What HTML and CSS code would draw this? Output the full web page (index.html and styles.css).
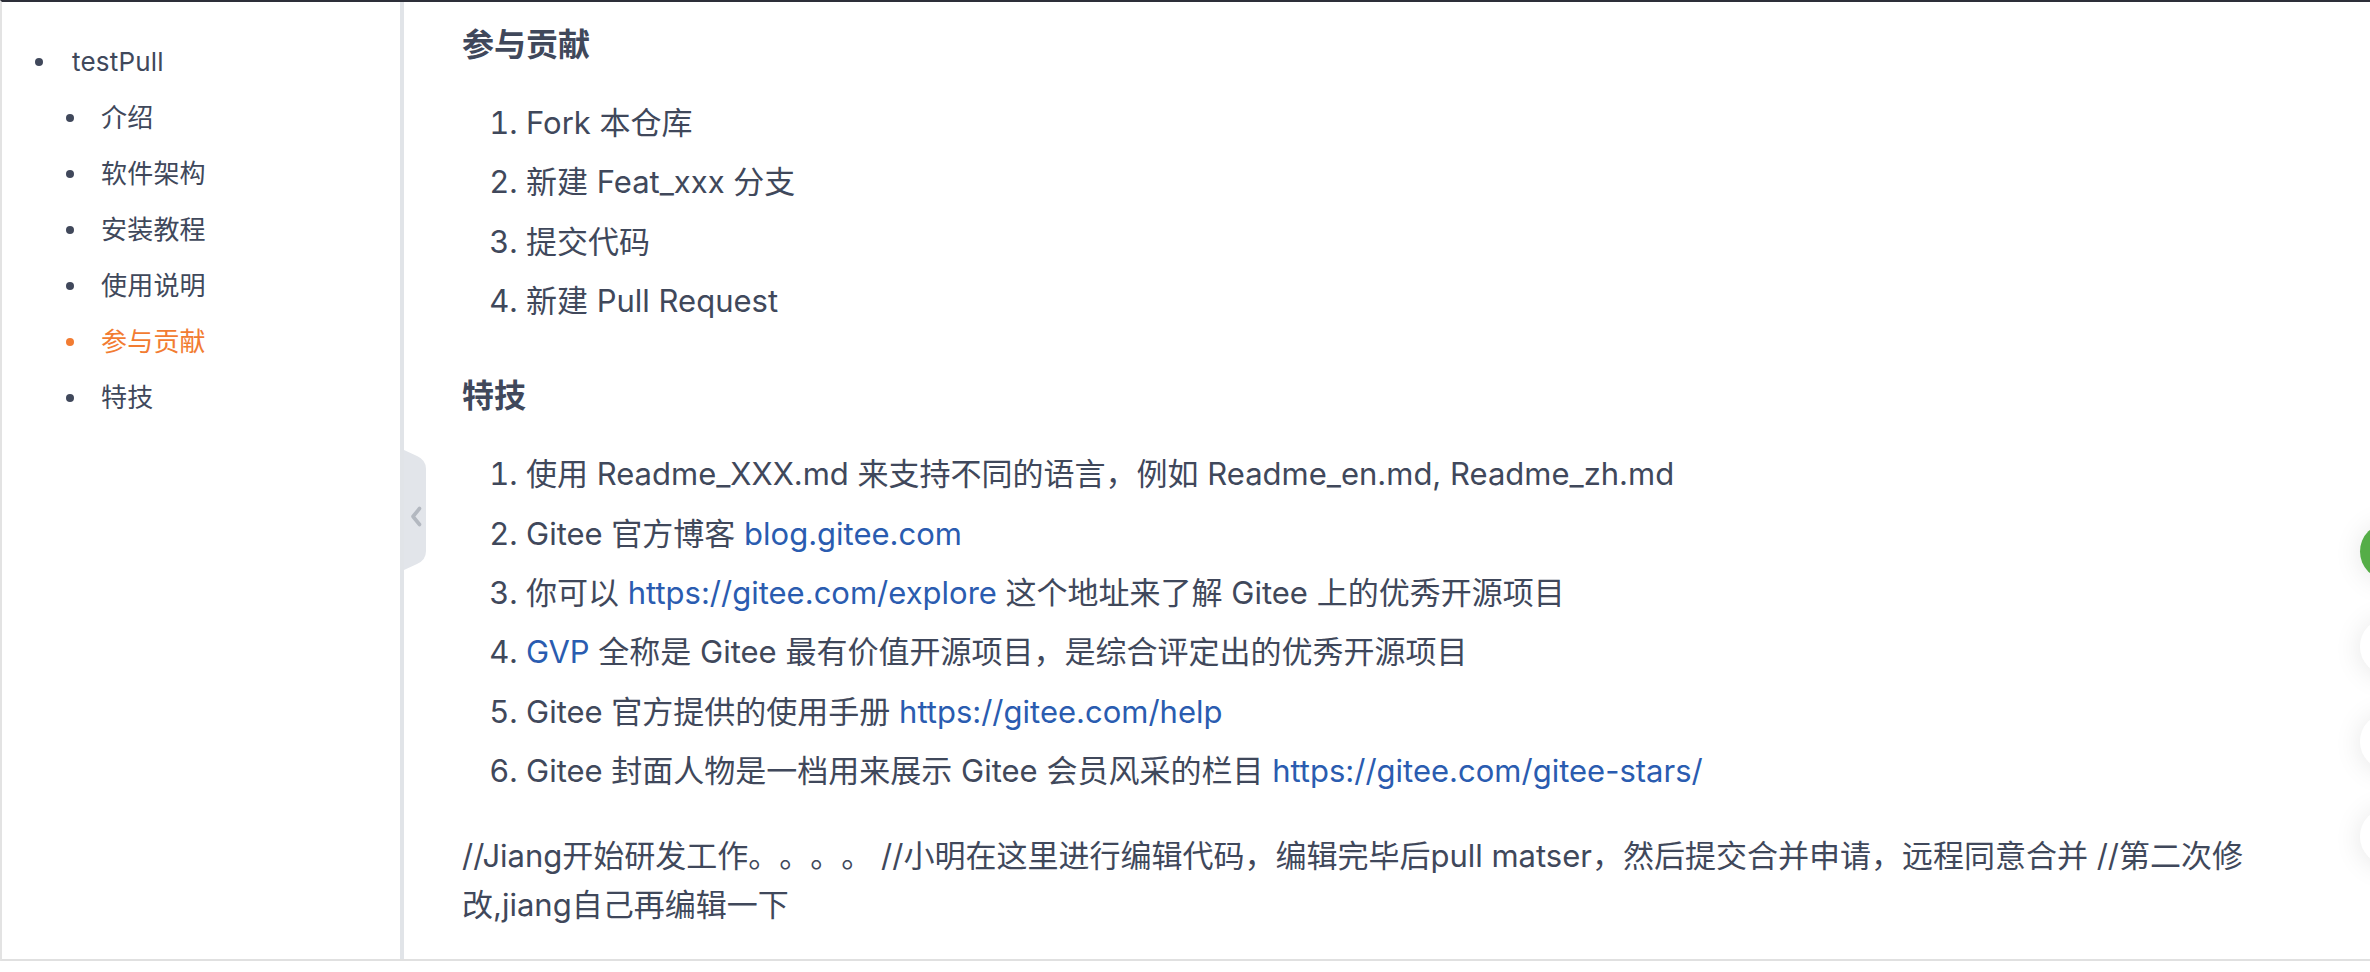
FILE: index.html
```html
<!DOCTYPE html>
<html lang="zh-CN">
<head>
<meta charset="utf-8">
<title>testPull</title>
<link rel="stylesheet" href="styles.css">
</head>
<body>
<div class="page">
  <aside class="sidebar">
    <ul class="toc">
      <li class="toc-item toc-root">
        <span class="toc-link">testPull</span>
        <ul class="toc-sub">
          <li class="toc-item"><span class="toc-link">介绍</span></li>
          <li class="toc-item"><span class="toc-link">软件架构</span></li>
          <li class="toc-item"><span class="toc-link">安装教程</span></li>
          <li class="toc-item"><span class="toc-link">使用说明</span></li>
          <li class="toc-item is-active"><span class="toc-link">参与贡献</span></li>
          <li class="toc-item"><span class="toc-link">特技</span></li>
        </ul>
      </li>
    </ul>
  </aside>
  <main class="main">
    <button class="collapse-tab" type="button" aria-label="收起目录">
      <svg width="22" height="120" viewBox="0 0 22 120">
        <path d="M0 0 L13 6 Q22 10 22 19 L22 101 Q22 110 13 114 L0 120 Z" fill="#e2e5ea"/>
        <path d="M15.5 58.5 L9 66.5 L15.5 74.5" fill="none" stroke="#b3b8c0" stroke-width="3.6" stroke-linecap="round" stroke-linejoin="round"/>
      </svg>
    </button>
    <article class="markdown">
      <section class="sec">
        <h3 class="sec-title">参与贡献</h3>
        <ol class="steps">
          <li>Fork 本仓库</li>
          <li>新建 Feat_xxx 分支</li>
          <li>提交代码</li>
          <li>新建 Pull Request</li>
        </ol>
      </section>
      <section class="sec">
        <h3 class="sec-title">特技</h3>
        <ol class="steps">
          <li>使用 Readme_XXX.md 来支持不同的语言，例如 Readme_en.md, Readme_zh.md</li>
          <li>Gitee 官方博客 <a class="link" href="#">blog.gitee.com</a></li>
          <li>你可以 <a class="link" href="#">https://gitee.com/explore</a> 这个地址来了解 Gitee 上的优秀开源项目</li>
          <li><a class="link" href="#">GVP</a> 全称是 Gitee 最有价值开源项目，是综合评定出的优秀开源项目</li>
          <li>Gitee 官方提供的使用手册 <a class="link" href="#">https://gitee.com/help</a></li>
          <li>Gitee 封面人物是一档用来展示 Gitee 会员风采的栏目 <a class="link" href="#">https://gitee.com/gitee-stars/</a></li>
        </ol>
      </section>
      <p class="note">//Jiang开始研发工作。。。。 //小明在这里进行编辑代码，编辑完毕后pull matser，然后提交合并申请，远程同意合并 //第二次修改,jiang自己再编辑一下</p>
    </article>
  </main>
</div>
<div class="float-tools">
  <span class="float-btn is-green"></span>
  <span class="float-btn"></span>
  <span class="float-btn"></span>
  <span class="float-btn"></span>
</div>
</body>
</html>
```

FILE: styles.css
```css
html, body {
  margin: 0;
  padding: 0;
  background: #ffffff;
  overflow: hidden;
}
body {
  width: 2370px;
  height: 972px;
  font-family: "Inter", "Noto Sans CJK SC", sans-serif;
  color: #40485b;
  text-spacing-trim: space-all;
}
.page {
  box-sizing: border-box;
  height: 961px;
  display: flex;
  border-top: 2px solid #2d2f39;
  border-left: 2px solid #e3e3e3;
  border-bottom: 2px solid #e0e0e0;
}
.sidebar {
  width: 398px;
  flex: none;
  border-right: 4px solid #e1e4e8;
  padding-top: 32px;
  box-sizing: content-box;
}
.toc, .toc-sub {
  list-style: none;
  margin: 0;
  padding: 0;
}
.toc {
  padding-left: 33px;
}
.toc-sub {
  padding-left: 31px;
}
.toc-link {
  display: flex;
  align-items: center;
  height: 56px;
  font-size: 26px;
  line-height: 56px;
  color: #40485b;
  letter-spacing: 0.2px;
}
.toc-link::before {
  content: "";
  width: 8px;
  height: 8px;
  border-radius: 50%;
  background: currentColor;
  margin-right: 29px;
  flex: none;
}
.toc-sub .toc-link::before {
  margin-right: 27px;
}
.toc-item.is-active > .toc-link {
  color: #f27c32;
}
.main {
  flex: 1;
  position: relative;
  padding: 23px 80px 0 58px;
  min-width: 0;
}
.collapse-tab {
  position: absolute;
  left: 0;
  top: 448px;
  width: 22px;
  height: 120px;
  padding: 0;
  margin: 0;
  border: 0;
  background: none;
  display: block;
}
.collapse-tab svg {
  display: block;
}
.markdown {
  font-size: 31px;
  line-height: 49px;
}
.sec-title {
  margin: 0 0 33px;
  font-size: 32px;
  line-height: 40px;
  font-weight: 600;
  color: #40485b;
}
.sec + .sec {
  margin-top: 51px;
}
.steps {
  margin: 0;
  padding-left: 64px;
}
.steps li + li {
  margin-top: 10.4px;
}
.link {
  color: #2a5cb0;
  text-decoration: none;
}
.note {
  margin: 35.5px 0 0;
}
.float-tools {
  position: fixed;
  left: 2360px;
  top: 523px;
  display: flex;
  flex-direction: column;
  gap: 38px;
}
.float-btn {
  display: block;
  width: 57px;
  height: 57px;
  border-radius: 50%;
  background: #ffffff;
  box-shadow: 0 2px 28px rgba(0, 0, 0, 0.10);
}
.float-btn.is-green {
  background: #55ad47;
}
```
